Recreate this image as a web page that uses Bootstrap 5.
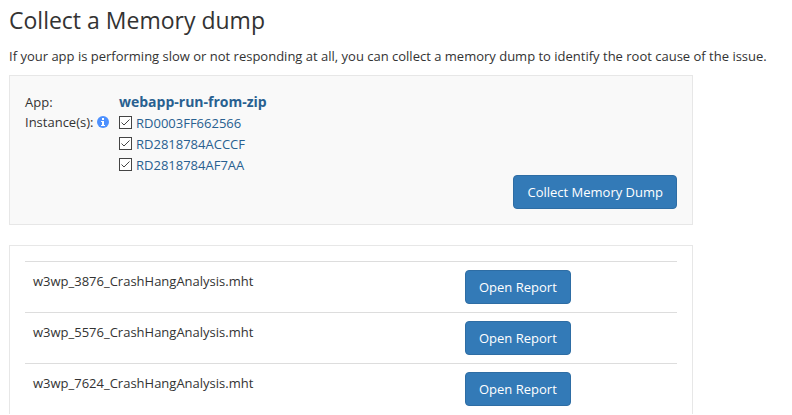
<!DOCTYPE html>
<html lang="en">
<head>
<meta charset="utf-8">
<meta name="viewport" content="width=device-width, initial-scale=1">
<title>Collect a Memory dump</title>
<link href="https://cdn.jsdelivr.net/npm/bootstrap@5.3.0/dist/css/bootstrap.min.css" rel="stylesheet">
<style>
  body { font-family: "Segoe UI", "Open Sans", "Noto Sans", sans-serif; font-size: 13px; line-height: 20px; color: #333; }
  .page { padding: 4px 4px 0 9px; }
  .page-title { font-size: 23px; line-height: 32px; font-weight: 400; margin-bottom: 10px; }
  .intro { margin-bottom: 9px; }
  .panel { max-width: 684px; border: 1px solid #e7e7e7; padding: 15px; }
  .panel-tools { background: #f9f9f9; margin-bottom: 20px; padding-top: 16px; }
  .caption-col { width: 94px; }
  .app-name { font-size: 14px; }
  .panel a, .instance label { color: #286090; text-decoration: none; }
  .instance { height: 21px; gap: 4px; }
  .instance input { appearance: none; width: 13px; height: 13px; margin: 0; border: 1px solid #444; background: #fff; }
  .instance input:checked { background: #fff url("data:image/svg+xml,%3Csvg xmlns='http://www.w3.org/2000/svg' viewBox='0 0 11 11'%3E%3Cpath d='M1.5 5.5l2.5 2.5 5.5-5.5' fill='none' stroke='%23444'/%3E%3C/svg%3E") center / 11px 11px no-repeat; }
  .btn-primary { --bs-btn-bg: #337ab7; --bs-btn-border-color: #2e6da4; --bs-btn-hover-bg: #286090; --bs-btn-font-size: 13px; --bs-btn-line-height: 20px; --bs-btn-padding-x: 13px; --bs-btn-border-radius: 4px; }
  .reports td { padding: 8px; border: 0; border-top: 1px solid #ddd; line-height: 22px; color: #333; }
  .action-col { width: 220px; }
</style>
<script src="https://cdn.jsdelivr.net/npm/bootstrap@5.3.0/dist/js/bootstrap.bundle.min.js"></script>
</head>
<body>
<main class="page">
  <h1 class="page-title">Collect a Memory dump</h1>
  <p class="intro">If your app is performing slow or not responding at all, you can collect a memory dump to identify the root cause of the issue.</p>

  <section class="panel panel-tools">
    <div class="d-flex">
      <div class="caption-col flex-shrink-0">App:</div>
      <a href="#" class="app-name fw-bold">webapp-run-from-zip</a>
    </div>
    <div class="d-flex">
      <div class="caption-col flex-shrink-0 d-flex align-items-start">
        <span>Instance(s):</span>
        <svg class="ms-1 mt-1 flex-shrink-0" width="12" height="12" viewBox="0 0 12 12" role="img" aria-label="Information"><circle cx="6" cy="6" r="6" fill="#4d90fe"/><path d="M5 2h2v2H5zM4 5h3v4h1v1H4V9h1V6H4z" fill="#fff"/></svg>
      </div>
      <div>
        <div class="instance d-flex align-items-center"><input type="checkbox" id="i1" checked><label for="i1">RD0003FF662566</label></div>
        <div class="instance d-flex align-items-center"><input type="checkbox" id="i2" checked><label for="i2">RD2818784ACCCF</label></div>
        <div class="instance d-flex align-items-center"><input type="checkbox" id="i3" checked><label for="i3">RD2818784AF7AA</label></div>
      </div>
    </div>
    <div class="text-end"><button type="button" class="btn btn-primary">Collect Memory Dump</button></div>
  </section>

  <section class="panel border-bottom-0 pb-0">
    <table class="table reports mb-0">
      <tbody>
        <tr><td>w3wp_3876_CrashHangAnalysis.mht</td><td class="action-col"><button type="button" class="btn btn-primary">Open Report</button></td></tr>
        <tr><td>w3wp_5576_CrashHangAnalysis.mht</td><td class="action-col"><button type="button" class="btn btn-primary">Open Report</button></td></tr>
        <tr><td>w3wp_7624_CrashHangAnalysis.mht</td><td class="action-col"><button type="button" class="btn btn-primary">Open Report</button></td></tr>
      </tbody>
    </table>
  </section>
</main>
</body>
</html>
